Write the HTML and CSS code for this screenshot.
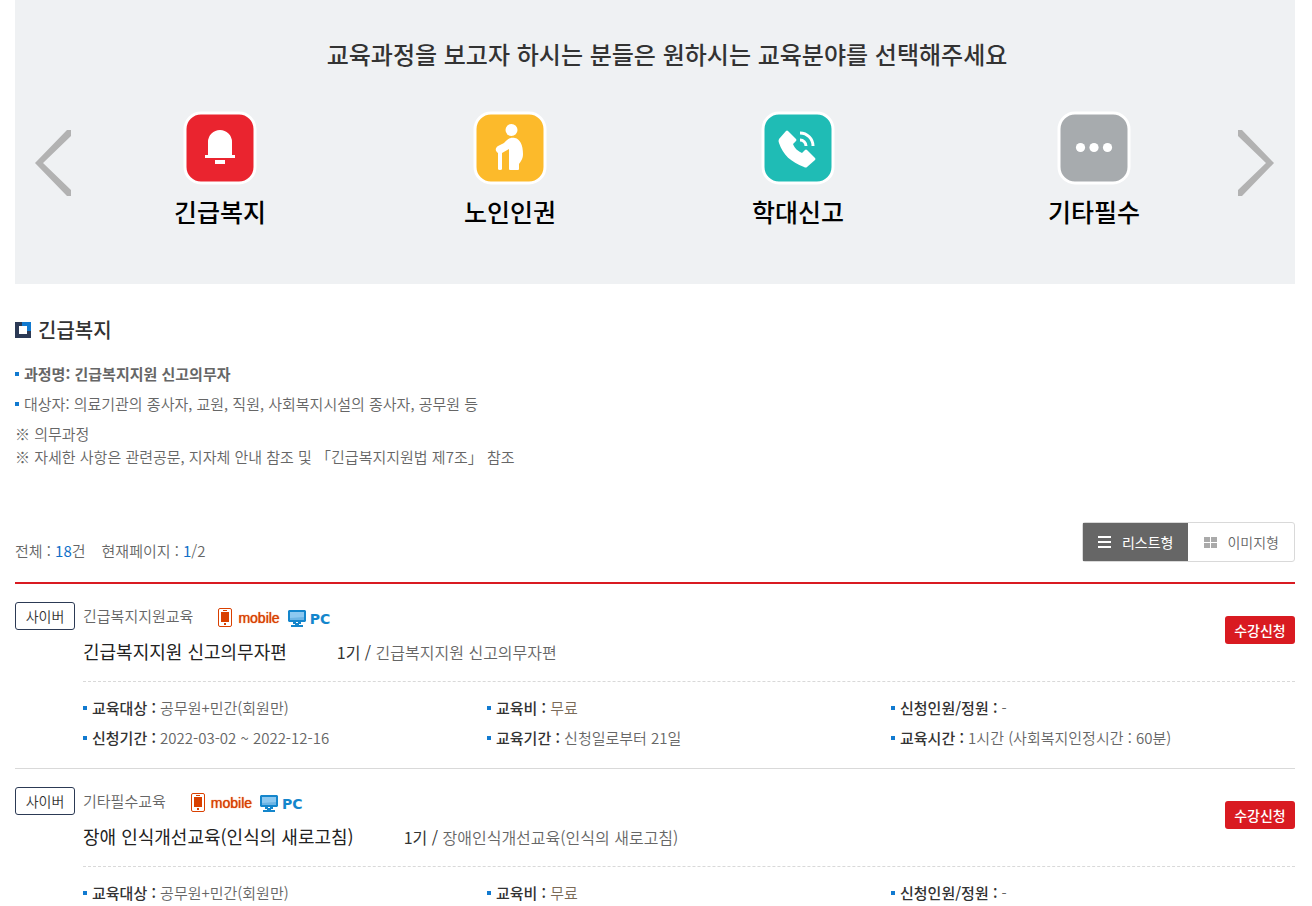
FILE: index.html
```html
<!DOCTYPE html>
<html lang="ko">
<head>
<meta charset="utf-8">
<title>교육과정</title>
<link rel="stylesheet" href="styles.css">
</head>
<body>
<svg class="defs" aria-hidden="true">
  <symbol id="phone" viewBox="0 0 14 19">
    <rect x=".5" y=".5" width="13" height="18" rx="1.5" fill="#fff" stroke="#d94000"/>
    <path d="M5 2h4v1H5zM3 4h8v10H3zM6 15h2v2H6z" fill="#d94000"/>
  </symbol>
  <symbol id="screen" viewBox="0 0 18 17">
    <path d="M1 0h16l1 1v10l-1 1H1l-1-1V1zM5 12h3v2H5zM10 12h3v2h-3zM3 15h12v2H3zM7 13h4v2H7z" fill="#1486cc"/>
    <path d="M2 2h14v8H2z" fill="#8cc8f0"/>
    <path d="M2 8L16 7v3H2z" fill="#6cb4e4"/>
  </symbol>
</svg>
<main class="page">
  <section class="hero">
    <h1 class="hero-title">교육과정을 보고자 하시는 분들은 원하시는 교육분야를 선택해주세요</h1>
    <button class="arrow arrow-prev" type="button" aria-label="이전"><svg width="36" height="66" viewBox="0 0 36 66"><path d="M36 0h-4L0 33l32 33h4v-6L8 33 36 6z" fill="#b2b2b2"/></svg></button>
    <nav class="fields">
      <a class="field" href="#">
        <svg width="74" height="74" viewBox="0 0 74 74"><rect x="2" y="2" width="70" height="70" rx="16" fill="#ea242f" stroke="#fff" stroke-width="3"/><path d="M25 44V31a12 12 0 0 1 24 0v13h3v3H22v-3zM32 49h10v4H32z" fill="#fff"/></svg>
        <span>긴급복지</span>
      </a>
      <a class="field" href="#">
        <svg width="74" height="74" viewBox="0 0 74 74"><rect x="2" y="2" width="70" height="70" rx="16" fill="#fcba2b" stroke="#fff" stroke-width="3"/><circle cx="38.500" cy="19" r="6" fill="#fff"/><path d="M42 27c5 1 8 7 8 16 0 5-2 7-4 10v5q0 1-1 1h-8q-1 0-1-1V38l-7 4v16q0 1-2 1t-2-1V42c-3-2-3-5 0-7l6-3c3-3 5-6 11-5z" fill="#fff"/></svg>
        <span>노인인권</span>
      </a>
      <a class="field" href="#">
        <svg width="74" height="74" viewBox="0 0 74 74"><rect x="2" y="2" width="70" height="70" rx="16" fill="#1fbcb5" stroke="#fff" stroke-width="3"/><path d="M25 20q1-1 2 0l8 8q1 1 0 2l-3 3c2 5 5 7 9 9l3-3q1-1 2 0l8 8q1 1 0 2l-8 7q-1 1-3 0C30 51 22 44 18 32q-1-2 0-4z" fill="#fff"/><path d="M39 29a6 6 0 0 1 6 6M39 22a13 13 0 0 1 13 13" fill="none" stroke="#fff" stroke-width="3"/></svg>
        <span>학대신고</span>
      </a>
      <a class="field" href="#">
        <svg width="74" height="74" viewBox="0 0 74 74"><rect x="2" y="2" width="70" height="70" rx="16" fill="#a7abae" stroke="#fff" stroke-width="3"/><g fill="#fff"><circle cx="23.500" cy="36.500" r="4.600"/><circle cx="37" cy="36.500" r="4.600"/><circle cx="50.500" cy="36.500" r="4.600"/></g></svg>
        <span>기타필수</span>
      </a>
    </nav>
    <button class="arrow arrow-next" type="button" aria-label="다음"><svg width="36" height="66" viewBox="0 0 36 66"><path d="M0 0h4l32 33L4 66H0v-6l28-27L0 6z" fill="#b2b2b2"/></svg></button>
  </section>

  <section class="intro">
    <h2 class="intro-title"><svg width="16" height="16" viewBox="0 0 16 16"><path d="M0 0h16v16H0z" fill="#2c3a55"/><path d="M7 0h9v9H7z" fill="#117ad0"/><path d="M4 4h8v8H4z" fill="#fff"/></svg>긴급복지</h2>
    <ul class="intro-list">
      <li class="dot strong">과정명: 긴급복지지원 신고의무자</li>
      <li class="dot">대상자: 의료기관의 종사자, 교원, 직원, 사회복지시설의 종사자, 공무원 등</li>
    </ul>
    <p class="note">※ 의무과정<br>※ 자세한 사항은 관련공문, 지자체 안내 참조 및 「긴급복지지원법 제7조」 참조</p>
  </section>

  <div class="toolbar">
    <p class="counts"><span>전체 : <b>18</b>건</span><span>현재페이지 : <b>1</b>/2</span></p>
    <div class="views">
      <button class="view view-on" type="button"><svg width="14" height="12" viewBox="0 0 14 12"><path d="M0 0h13v2H0zM0 5h13v2H0zM0 10h13v2H0z" fill="#fff"/></svg>리스트형</button>
      <button class="view" type="button"><svg width="14" height="12" viewBox="0 0 14 12"><path d="M1 1h6v5H1zM8 1h6v5H8zM1 7h6v5H1zM8 7h6v5H8z" fill="#aaa"/></svg>이미지형</button>
    </div>
  </div>

  <ul class="courses">
    <li class="course">
      <span class="badge">사이버</span>
      <div class="course-body">
        <div class="course-head">
          <div>
            <p class="category"><span>긴급복지지원교육</span><span class="device mobile"><svg width="14" height="19"><use href="#phone"/></svg>mobile</span><span class="device pc"><svg width="18" height="17"><use href="#screen"/></svg>PC</span></p>
            <p class="name"><a href="#">긴급복지지원 신고의무자편</a><span class="term"><em>1기 /</em> 긴급복지지원 신고의무자편</span></p>
          </div>
          <button class="apply" type="button">수강신청</button>
        </div>
        <ul class="facts">
          <li class="dot"><strong>교육대상 :</strong> 공무원+민간(회원만)</li>
          <li class="dot"><strong>교육비 :</strong> <span class="free">무료</span></li>
          <li class="dot"><strong>신청인원/정원 :</strong> -</li>
          <li class="dot"><strong>신청기간 :</strong> 2022-03-02 ~ 2022-12-16</li>
          <li class="dot"><strong>교육기간 :</strong> 신청일로부터 21일</li>
          <li class="dot"><strong>교육시간 :</strong> 1시간 (사회복지인정시간 : 60분)</li>
        </ul>
      </div>
    </li>
    <li class="course">
      <span class="badge">사이버</span>
      <div class="course-body">
        <div class="course-head">
          <div>
            <p class="category"><span>기타필수교육</span><span class="device mobile"><svg width="14" height="19"><use href="#phone"/></svg>mobile</span><span class="device pc"><svg width="18" height="17"><use href="#screen"/></svg>PC</span></p>
            <p class="name"><a href="#">장애 인식개선교육(인식의 새로고침)</a><span class="term"><em>1기 /</em> 장애인식개선교육(인식의 새로고침)</span></p>
          </div>
          <button class="apply" type="button">수강신청</button>
        </div>
        <ul class="facts">
          <li class="dot"><strong>교육대상 :</strong> 공무원+민간(회원만)</li>
          <li class="dot"><strong>교육비 :</strong> <span class="free">무료</span></li>
          <li class="dot"><strong>신청인원/정원 :</strong> -</li>
        </ul>
      </div>
    </li>
  </ul>
</main>
</body>
</html>
```

FILE: styles.css
```css
* { box-sizing: border-box; }
body {
  margin: 0;
  background: #fff;
  color: #666;
  font: 350 15px/24px "Noto Sans CJK KR", "Noto Sans", sans-serif;
}
h1, h2, p, ul { margin: 0; padding: 0; }
ul { list-style: none; }
a { color: inherit; text-decoration: none; }
button { padding: 0; border: 0; background: none; color: inherit; font: inherit; cursor: pointer; }
svg { display: block; flex: none; }
.defs { position: absolute; width: 0; height: 0; }
.page { padding: 0 17px 0 15px; }

.hero { position: relative; padding: 36px 0 54px; background: #eff1f3; }
.hero-title {
  padding-left: 24px;
  color: #333;
  font-size: 24px;
  font-weight: 500;
  line-height: 36px;
  text-align: center;
}
.fields {
  display: grid;
  grid-template-columns: 290fr 290fr 286fr 306fr;
  padding: 39px 48px 0 60px;
}
.field {
  display: flex;
  flex-direction: column;
  align-items: center;
  gap: 7px;
  color: #000;
  font-size: 25px;
  font-weight: 500;
  line-height: 38px;
}
.arrow { position: absolute; top: 130px; }
.arrow-prev { left: 20px; }
.arrow-next { right: 21px; }

.intro { padding-top: 31px; }
.intro-title {
  display: flex;
  align-items: center;
  gap: 7px;
  color: #333;
  font-size: 20px;
  font-weight: 500;
  line-height: 30px;
}
.intro-list { padding-top: 14px; line-height: 30px; }
.dot { position: relative; padding-left: 9px; }
.dot::before {
  content: "";
  position: absolute;
  top: 13px;
  left: 0;
  width: 4px;
  height: 4px;
  background: #117ad0;
}
.strong { font-weight: 700; }
.note { padding-top: 3px; line-height: 23px; }

.toolbar {
  display: flex;
  align-items: flex-end;
  justify-content: space-between;
  padding: 54px 0 20px;
}
.counts { display: flex; gap: 16px; line-height: 22px; }
.counts b { color: #1170c8; font-weight: 400; }
.views { display: flex; border: 1px solid #d9d9d9; border-radius: 3px; }
.view {
  display: flex;
  align-items: center;
  gap: 10px;
  height: 38px;
  padding: 0 15px;
  font-size: 14px;
}
.view-on { background: #666; color: #fff; font-weight: 400; }

.courses { border-top: 2px solid #d91a21; }
.course {
  display: flex;
  align-items: flex-start;
  gap: 8px;
  padding-top: 18px;
  border-bottom: 1px solid #d9d9d9;
}
.badge {
  flex: none;
  width: 60px;
  border: 1px solid #2c3a55;
  border-radius: 3px;
  color: #333;
  font-size: 14px;
  line-height: 26px;
  text-align: center;
}
.course-body { flex: 1; }
.course-head {
  display: flex;
  align-items: flex-start;
  justify-content: space-between;
  padding-bottom: 8px;
  border-bottom: 1px dashed #d9d9d9;
}
.category { display: flex; line-height: 28px; }
.device { display: flex; align-items: center; line-height: 20px; }
.mobile {
  gap: 6px;
  margin-left: 25px;
  padding-top: 3px;
  color: #d94000;
  font-family: "Liberation Sans", Arial, sans-serif;
  font-size: 14px;
  font-weight: 400;
  text-shadow: 0 0 1px #d94000;
}
.pc {
  gap: 4px;
  margin-left: 8px;
  padding-top: 5px;
  color: #1486cc;
  font-family: "DejaVu Sans", sans-serif;
  font-size: 14px;
  font-weight: 700;
}
.name {
  display: flex;
  align-items: baseline;
  gap: 50px;
  color: #222;
  font-size: 18px;
  font-weight: 400;
  line-height: 42px;
}
.term { color: #666; font-size: 16px; font-weight: 350; }
.term em { color: #333; font-style: normal; font-weight: 400; }
.apply {
  width: 70px;
  height: 28px;
  margin-top: 14px;
  border-radius: 3px;
  background: #d91a21;
  color: #fff;
  font-size: 14px;
  font-weight: 500;
  line-height: 28px;
}
.facts {
  display: grid;
  grid-template-columns: repeat(3, 1fr);
  padding: 11px 0 15px;
  line-height: 30px;
}
.facts strong { color: #333; font-weight: 500; }
.free { color: #7a6a58; }
```
